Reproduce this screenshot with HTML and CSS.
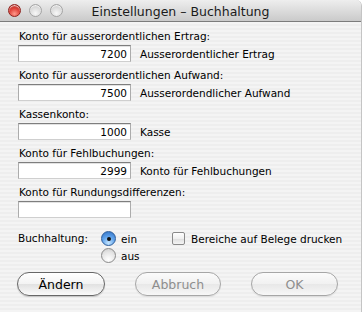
FILE: index.html
```html
<!DOCTYPE html>
<html lang="de">
<head>
  <meta charset="UTF-8">
  <title>Einstellungen – Buchhaltung</title>
  <link rel="stylesheet" href="styles.css">
</head>
<body>

  <div class="window">
    <div class="titlebar">
      <div class="lights">
        <span class="light close"></span>
        <span class="light"></span>
        <span class="light"></span>
      </div>
      <div class="title">Einstellungen – Buchhaltung</div>
    </div>

    <div class="content">
      <div class="group">
        <label for="ertrag">Konto für ausserordentlichen Ertrag:</label>
        <div class="row">
          <input type="text" id="ertrag" value="7200">
          <span class="desc">Ausserordentlicher Ertrag</span>
        </div>
      </div>

      <div class="group">
        <label for="aufwand">Konto für ausserordentlichen Aufwand:</label>
        <div class="row">
          <input type="text" id="aufwand" value="7500">
          <span class="desc">Ausserordendlicher Aufwand</span>
        </div>
      </div>

      <div class="group">
        <label for="kasse">Kassenkonto:</label>
        <div class="row">
          <input type="text" id="kasse" value="1000">
          <span class="desc">Kasse</span>
        </div>
      </div>

      <div class="group">
        <label for="fehl">Konto für Fehlbuchungen:</label>
        <div class="row">
          <input type="text" id="fehl" value="2999">
          <span class="desc">Konto für Fehlbuchungen</span>
        </div>
      </div>

      <div class="group">
        <label for="rundung">Konto für Rundungsdifferenzen:</label>
        <div class="row">
          <input type="text" id="rundung" value="">
        </div>
      </div>

      <div class="options">
        <span class="opt-label">Buchhaltung:</span>
        <div class="radios">
          <div class="radio-item"><span class="radio on"></span>ein</div>
          <div class="radio-item"><span class="radio"></span>aus</div>
        </div>
        <div class="check-item"><span class="check"></span>Bereiche auf Belege drucken</div>
      </div>

      <div class="buttons">
        <button class="btn btn-change">Ändern</button>
        <button class="btn btn-cancel" disabled>Abbruch</button>
        <button class="btn btn-ok" disabled>OK</button>
      </div>
    </div>
  </div>

</body>
</html>
```

FILE: styles.css
```css
* {
  box-sizing: border-box;
}

body {
  margin: 0;
  background: #ffffff;
  font-family: "DejaVu Sans", sans-serif;
  font-size: 10.5px;
  color: #000;
}

.window {
  width: 362px;
  height: 312px;
  overflow: hidden;
  border-top-right-radius: 6px;
  border-right: 1px solid #c4c4c4;
  background: repeating-linear-gradient(to bottom, #eeeeee 0, #eeeeee 2px, #f4f4f4 2px, #f4f4f4 4px);
}

/* Title bar */
.titlebar {
  height: 22px;
  display: grid;
  grid-template-columns: 1fr auto 1fr;
  align-items: center;
  background: linear-gradient(#eeeeee, #dcdcdc 50%, #cacaca);
  border-bottom: 1px solid #7c7c7c;
}

.lights {
  display: flex;
  gap: 8px;
  padding-left: 8px;
}

.light {
  width: 13px;
  height: 13px;
  border-radius: 50%;
  border: 1px solid #a4a4a4;
  background: radial-gradient(circle at 50% 75%, #f8f8f8 0, #dcdcdc 55%, #bebebe 100%);
  box-shadow: inset 0 1px 1px rgba(255, 255, 255, 0.8);
}

.light.close {
  border-color: #8e211c;
  background: radial-gradient(circle at 50% 80%, #ff9a8c 0, #e0443b 50%, #a61d15 100%);
}

.title {
  font-size: 12.5px;
  color: #1a1a1a;
  padding-top: 1px;
}

/* Form */
.content {
  padding: 7px 0 0 18px;
}

.group {
  margin-bottom: 6px;
}

label {
  display: block;
  line-height: 14px;
  margin-bottom: 2px;
  padding-left: 1px;
}

.row {
  display: flex;
  align-items: center;
}

input[type="text"] {
  width: 113px;
  height: 17px;
  padding: 1px 3px 0 3px;
  margin: 0;
  font-family: "DejaVu Sans", sans-serif;
  font-size: 10.5px;
  text-align: right;
  background: #ffffff;
  border: 1px solid #acacac;
  border-top-color: #7e7e7e;
  border-bottom-color: #cfcfcf;
  box-shadow: inset 0 1px 0 #e2e2e2;
  outline: none;
}

.desc {
  margin-left: 9px;
}

/* Radio + checkbox row */
.options {
  display: flex;
  margin-top: 12px;
}

.opt-label {
  width: 83px;
  line-height: 17px;
}

.radios {
  width: 71px;
}

.radio-item, .check-item {
  display: flex;
  align-items: center;
  height: 17px;
}

.radio {
  width: 15px;
  height: 15px;
  border-radius: 50%;
  margin-right: 5px;
  border: 1px solid #8a8a8a;
  background: radial-gradient(circle at 50% 80%, #ffffff 0, #e4e4e4 60%, #c8c8c8 100%);
  position: relative;
}

.radio.on {
  border-color: #2d5d9a;
  background: radial-gradient(circle at 50% 85%, #c6e6ff 0, #5fa2ea 50%, #2f6fc4 100%);
}

.radio.on::after {
  content: "";
  position: absolute;
  left: 4.5px;
  top: 4.5px;
  width: 4px;
  height: 4px;
  border-radius: 50%;
  background: #111;
}

.check {
  width: 13px;
  height: 13px;
  margin-right: 6px;
  border: 1px solid #8a8a8a;
  border-radius: 2px;
  background: linear-gradient(#ffffff, #f0f0f0 50%, #dedede 51%, #f4f4f4);
}

/* Buttons */
.buttons {
  display: flex;
  gap: 30px;
  margin-top: 8px;
  margin-left: -1px;
}

.btn {
  width: 88px;
  height: 24px;
  border-radius: 12px;
  border: 1px solid #676767;
  background: linear-gradient(#ffffff, #f3f3f3 50%, #e2e2e2 52%, #fafafa);
  box-shadow: 0 1px 1px rgba(0, 0, 0, 0.18);
  font-family: "DejaVu Sans", sans-serif;
  font-size: 12.5px;
  color: #000;
  padding: 0;
}

.btn-cancel {
  width: 86px;
}

.btn-ok {
  width: 87px;
}

.btn:disabled {
  color: #8e8e8e;
  border-color: #a6a6a6;
  background: linear-gradient(#fbfbfb, #f1f1f1 50%, #e8e8e8 52%, #f7f7f7);
  box-shadow: 0 1px 1px rgba(0, 0, 0, 0.08);
}
```
